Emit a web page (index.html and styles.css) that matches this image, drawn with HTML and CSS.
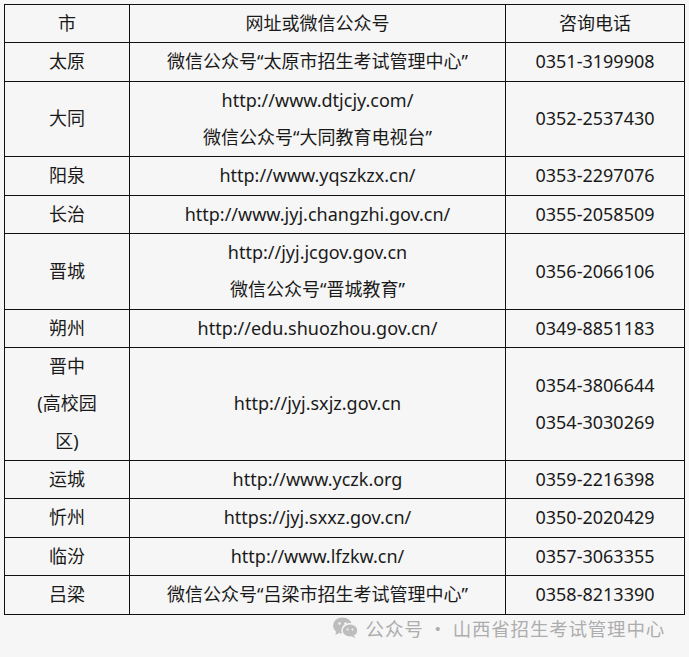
FILE: index.html
```html
<!DOCTYPE html>
<html lang="zh">
<head>
<meta charset="utf-8">
<link rel="stylesheet" href="styles.css">
</head>
<body>
<table class="info">
  <colgroup><col class="c1"><col class="c2"><col class="c3"></colgroup>
  <tr><td>市</td><td>网址或微信公众号</td><td>咨询电话</td></tr>
  <tr><td>太原</td><td>微信公众号“太原市招生考试管理中心”</td><td>0351-3199908</td></tr>
  <tr><td>大同</td><td>http://www.dtjcjy.com/<br>微信公众号“大同教育电视台”</td><td>0352-2537430</td></tr>
  <tr><td>阳泉</td><td>http://www.yqszkzx.cn/</td><td>0353-2297076</td></tr>
  <tr><td>长治</td><td>http://www.jyj.changzhi.gov.cn/</td><td>0355-2058509</td></tr>
  <tr><td>晋城</td><td>http://jyj.jcgov.gov.cn<br>微信公众号“晋城教育”</td><td>0356-2066106</td></tr>
  <tr><td>朔州</td><td>http://edu.shuozhou.gov.cn/</td><td>0349-8851183</td></tr>
  <tr><td class="narrow">晋中<br>(高校园<br>区)</td><td>http://jyj.sxjz.gov.cn</td><td>0354-3806644<br>0354-3030269</td></tr>
  <tr><td>运城</td><td>http://www.yczk.org</td><td>0359-2216398</td></tr>
  <tr><td>忻州</td><td>https://jyj.sxxz.gov.cn/</td><td>0350-2020429</td></tr>
  <tr><td>临汾</td><td>http://www.lfzkw.cn/</td><td>0357-3063355</td></tr>
  <tr><td>吕梁</td><td>微信公众号“吕梁市招生考试管理中心”</td><td>0358-8213390</td></tr>
</table>
<div class="footer">
  <svg class="wx" width="25" height="21" viewBox="0 0 25 21">
    <ellipse cx="9.5" cy="8.5" rx="9.5" ry="8" fill="#bdbdbd"/>
    <path d="M3 14 L2.5 18 L7 15.5 Z" fill="#bdbdbd"/>
    <ellipse cx="17" cy="13.5" rx="8" ry="6.8" fill="#bdbdbd" stroke="#f6f6f6" stroke-width="1.5"/>
    <path d="M21 18.5 L22.5 21 L18.5 19.5 Z" fill="#bdbdbd"/>
    <circle cx="6.5" cy="6.5" r="1.2" fill="#f6f6f6"/>
    <circle cx="12.5" cy="6.5" r="1.2" fill="#f6f6f6"/>
    <circle cx="14.5" cy="12.5" r="1" fill="#f6f6f6"/>
    <circle cx="19.5" cy="12.5" r="1" fill="#f6f6f6"/>
  </svg>
  <span>公众号 · 山西省招生考试管理中心</span>
</div>
</body>
</html>
```
FILE: styles.css
```css
html, body {
  background: #f6f6f6;
}
body {
  margin: 4px;
  font-family: "Noto Sans", "Noto Sans CJK SC", sans-serif;
  color: #1a1a1a;
}
.info {
  border-collapse: collapse;
  width: 680px;
  table-layout: fixed;
  font-size: 18px;
}
.c1 { width: 125px; }
.c2 { width: 376px; }
.c3 { width: 179px; }
.info td {
  border: 1px solid #111;
  padding: 0;
  text-align: center;
  vertical-align: middle;
  line-height: 37.35px;
}
.info td.narrow {
  padding: 0 24px;
}
.footer {
  display: flex;
  justify-content: flex-end;
  align-items: center;
  gap: 8px;
  padding: 0 20px 0 0;
  color: #adadad;
  font-size: 18.5px;
  font-family: "Noto Sans CJK SC", sans-serif;
  letter-spacing: 0.8px;
}
.wx { display: block; }
```
